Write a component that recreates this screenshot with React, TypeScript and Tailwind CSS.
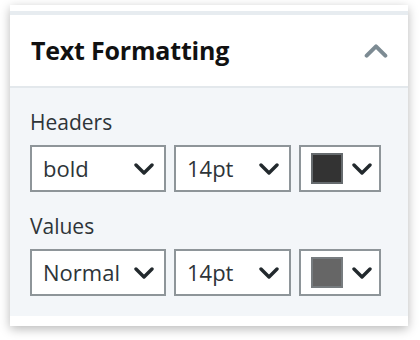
function Chevron({ up, className }: { up?: boolean; className: string }) {
  return (
    <svg viewBox="0 0 20 12" className={className} fill="none" stroke="currentColor" strokeWidth={3.4} strokeLinecap="round" strokeLinejoin="round">
      <polyline points={up ? '2,10 10,2 18,10' : '2,2 10,10 18,2'} />
    </svg>
  );
}

function Select({ label, width }: { label: string; width: string }) {
  return (
    <div className={`${width} h-[47px] bg-white border-2 border-[#8e9599] flex items-center justify-between pl-[11px] pr-[10px]`}>
      <span className="text-[22px] text-[#2e3438]">{label}</span>
      <Chevron className="w-[20px] h-[12px] text-[#22292d]" />
    </div>
  );
}

function ColorSelect({ fill, border }: { fill: string; border: string }) {
  return (
    <div className="w-[82px] h-[47px] bg-white border-2 border-[#8e9599] flex items-center gap-[9px] pl-[10px]">
      <div className={`w-[32px] h-[31px] border-2 ${fill} ${border}`} />
      <Chevron className="w-[20px] h-[12px] text-[#22292d]" />
    </div>
  );
}

export default function App() {
  return (
    <div className="w-[420px] h-[340px] bg-white pt-[5px] px-[10px]" style={{ fontFamily: '"Open Sans", sans-serif' }}>
      <div className="w-[398px] bg-white shadow-[0_3px_10px_rgba(0,0,0,0.28)] pt-[6px] pb-[10px]">
        <div className="h-[4px] bg-[#e7ecf0]" />
        <div className="h-[73px] flex items-center justify-between pl-[21px] pr-[20px] border-b-2 border-[#e3e8ec]">
          <h2 className="text-[25px] font-bold text-[#111] tracking-[-0.2px]">Text Formatting</h2>
          <Chevron up className="w-[24px] h-[14px] text-[#7d8b93]" />
        </div>
        <div className="bg-[#f3f6f9] px-[20px] pt-[20px] pb-[20px]">
          <div className="text-[21px] text-[#2e3438] leading-[28px] mb-[9px]">Headers</div>
          <div className="flex gap-[8px]">
            <Select label="bold" width="w-[136px]" />
            <Select label="14pt" width="w-[117px]" />
            <ColorSelect fill="bg-[#333333]" border="border-[#666b6e]" />
          </div>
          <div className="text-[21px] text-[#2e3438] leading-[28px] mt-[20px] mb-[9px]">Values</div>
          <div className="flex gap-[8px]">
            <Select label="Normal" width="w-[136px]" />
            <Select label="14pt" width="w-[117px]" />
            <ColorSelect fill="bg-[#666666]" border="border-[#777c7f]" />
          </div>
        </div>
      </div>
    </div>
  );
}
